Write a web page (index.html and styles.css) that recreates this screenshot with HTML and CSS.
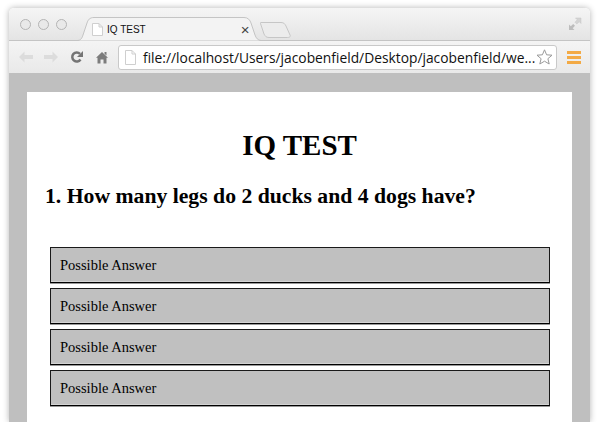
FILE: index.html
```html
<!DOCTYPE html>
<html lang="en">
<head>
<meta charset="UTF-8">
<meta name="viewport" content="width=device-width, initial-scale=1.0">
<title>IQ TEST</title>
<link rel="stylesheet" href="styles.css">
</head>
<body>
<div class="window">
    <div class="titlebar">
        <div class="lights">
            <span class="light"></span>
            <span class="light"></span>
            <span class="light"></span>
        </div>
        <div class="tab">
            <svg class="tab-shape" width="188" height="24" viewBox="0 0 188 24">
                <path d="M0 23.500 H2 C6 23.500 7 21 8 18 L12 6 C13 3 14.500 .5 19 .5 H169 C173 .5 175 3 176 6 L180 18 C181 21 183 23.500 186 23.500 H188" fill="#f3f3f3" stroke="#c4c4c4"/>
            </svg>
            <svg class="page-icon" width="11" height="13" viewBox="0 0 11 13">
                <path d="M.5 .5 H7 L10.500 4 V12.500 H.5 Z M7 .5 V4 H10.500" fill="#fff" stroke="#cfcfcf"/>
            </svg>
            <span class="tab-title">IQ TEST</span>
            <span class="tab-close">&#215;</span>
        </div>
        <svg class="new-tab" width="31" height="16" viewBox="0 0 31 16">
            <path d="M1 .5 H21 C24 .5 25 2 26 4 L30 13 C31 15 29 15.500 27 15.500 H9 C6 15.500 5 14 4 12 L1 3 C.5 1.500 0 .5 1 .5 Z" fill="#ececec" stroke="#c6c6c6"/>
        </svg>
        <svg class="fullscreen" width="14" height="14" viewBox="0 0 14 14">
            <path d="M7.500 1 H13 V6.500 L11.200 4.700 L8.800 7 L7 5.200 L9.300 2.800 Z" fill="#d4d4d4" stroke="#c4c4c4" stroke-width=".5"/>
            <path d="M6.500 13 H1 V7.500 L2.800 9.300 L5.200 7 L7 8.800 L4.700 11.200 Z" fill="#bdbdbd"/>
        </svg>
    </div>
    <div class="toolbar">
        <svg class="nav-icon back" width="16" height="12" viewBox="0 0 16 12">
            <path d="M6.500 .5 L1 6 L6.500 11.500 V8 H15 V4 H6.500 Z" fill="#dcdcdc"/>
        </svg>
        <svg class="nav-icon forward" width="16" height="12" viewBox="0 0 16 12">
            <path d="M9.500 .5 L15 6 L9.500 11.500 V8 H1 V4 H9.500 Z" fill="#dcdcdc"/>
        </svg>
        <svg class="nav-icon reload" width="14" height="14" viewBox="0 0 14 14">
            <path d="M10.500 9.500 A4.500 4.500 0 1 1 10 3.800" fill="none" stroke="#757575" stroke-width="2.500"/>
            <path d="M13 1 V7 H7 Z" fill="#757575"/>
        </svg>
        <svg class="nav-icon home" width="12" height="13" viewBox="0 0 12 13">
            <path d="M6 1 L12 6.800 H10.500 V12.500 H7.500 V8.500 H4.500 V12.500 H1.500 V6.800 H0 Z M8.500 1 H10.500 V4.500 L8.500 2.800 Z" fill="#7c7c7c"/>
        </svg>
        <div class="omnibox">
            <svg class="page-icon" width="11" height="15" viewBox="0 0 11 15">
                <path d="M.5 .5 H7 L10.500 4 V14.500 H.5 Z M7 .5 V4 H10.500" fill="#fff" stroke="#cfcfcf"/>
            </svg>
            <span class="url">file://localhost/Users/jacobenfield/Desktop/jacobenfield/we...</span>
            <svg class="star" width="17" height="16" viewBox="0 0 17 16">
                <path d="M8.500 .8 L10.600 5.800 L16 6.200 L11.900 9.700 L13.200 15 L8.500 12.200 L3.800 15 L5.100 9.700 L1 6.200 L6.400 5.800 Z" fill="#fff" stroke="#999" stroke-linejoin="round"/>
            </svg>
        </div>
        <div class="menu">
            <span></span>
            <span></span>
            <span></span>
        </div>
    </div>
    <div class="viewport">
        <div class="page">
            <h1>IQ TEST</h1>
            <h2>1. How many legs do 2 ducks and 4 dogs have?</h2>
            <div class="answers">
                <div class="answer">Possible Answer</div>
                <div class="answer">Possible Answer</div>
                <div class="answer">Possible Answer</div>
                <div class="answer">Possible Answer</div>
            </div>
        </div>
    </div>
</div>
</body>
</html>
```

FILE: styles.css
```css
/* Browser chrome */
html, body {
    height: 100%;
}
body {
    margin: 0;
    padding: 8px 10px 0 9px;
    box-sizing: border-box;
    overflow: hidden;
    background-color: #fff;
    font-family: "Liberation Serif", serif;
}
.window {
    height: 414px;
    display: flex;
    flex-direction: column;
    border-radius: 5px 5px 0 0;
    box-shadow: 0 0 6px rgba(0, 0, 0, 0.3);
    overflow: hidden;
}
.titlebar {
    height: 33px;
    flex: none;
    display: flex;
    align-items: flex-end;
    box-sizing: border-box;
    border-bottom: 1px solid #c4c4c4;
    background: linear-gradient(#f5f5f5, #e4e4e4);
}
.lights {
    display: flex;
    gap: 7px;
    align-self: flex-start;
    padding: 11px 0 0 11px;
}
.light {
    width: 9px;
    height: 9px;
    border: 1px solid #b4b4b4;
    border-radius: 50%;
    background-color: #e9e9e9;
}
.tab {
    width: 188px;
    height: 24px;
    margin-left: 8px;
    margin-bottom: -1px;
    flex: none;
    display: flex;
    align-items: center;
    position: relative;
    font-family: "Liberation Sans", sans-serif;
    font-size: 10px;
    color: #111;
}
.tab-shape {
    position: absolute;
    left: 0;
    top: 0;
}
.tab .page-icon {
    flex: none;
    position: relative;
    margin-left: 17px;
}
.tab-title {
    position: relative;
    margin-left: 4px;
}
.tab-close {
    position: relative;
    margin-left: 95px;
    font-size: 15px;
    color: #444;
}
.new-tab {
    margin-left: -3px;
    margin-bottom: 2px;
    flex: none;
}
.fullscreen {
    margin-left: auto;
    margin-right: 8px;
    align-self: flex-start;
    margin-top: 9px;
}
.toolbar {
    height: 32px;
    flex: none;
    display: flex;
    align-items: center;
    box-sizing: border-box;
    padding-left: 9px;
    background: linear-gradient(#f4f4f4, #e9e9e9);
}
.nav-icon {
    flex: none;
}
.forward {
    margin-left: 9px;
}
.reload {
    margin-left: 11px;
}
.home {
    margin-left: 12px;
}
.omnibox {
    flex: 1;
    height: 25px;
    margin-left: 10px;
    display: flex;
    align-items: center;
    box-sizing: border-box;
    padding-left: 6px;
    border: 1px solid #c9c9c9;
    border-radius: 3px;
    background-color: #fff;
    font-family: "Open Sans", sans-serif;
    font-size: 13.800px;
    color: #111;
}
.url {
    margin-left: 7px;
    white-space: nowrap;
}
.star {
    margin-left: auto;
    margin-right: 3px;
    flex: none;
}
.menu {
    width: 14px;
    margin: 0 9px 0 10px;
    flex: none;
    display: flex;
    flex-direction: column;
    gap: 2px;
}
.menu span {
    height: 3px;
    background-color: #f3aa45;
}

/* Page content */
.viewport {
    flex: 1;
    padding: 19px 18px 0;
    background-color: #bfbfbf;
}
.page {
    height: 100%;
    box-sizing: border-box;
    padding: 38px 18px 0;
    background-color: #fff;
    color: #000;
}
h1 {
    margin: 0;
    font-size: 29px;
    line-height: 30px;
    text-align: center;
}
h2 {
    margin: 23px 0 0;
    font-size: 21.700px;
    line-height: 26px;
}
.answers {
    margin: 38px 4px 0 5px;
    display: flex;
    flex-direction: column;
    gap: 5px;
}
.answer {
    height: 36px;
    box-sizing: border-box;
    padding-left: 9px;
    display: flex;
    align-items: center;
    border: 1px solid #1a1a1a;
    border-bottom-color: #000;
    box-shadow: inset 0 -1px 0 #d4d4d4, 0 1px 0 #999;
    background-color: #c0c0c0;
    font-size: 14.500px;
}
```
